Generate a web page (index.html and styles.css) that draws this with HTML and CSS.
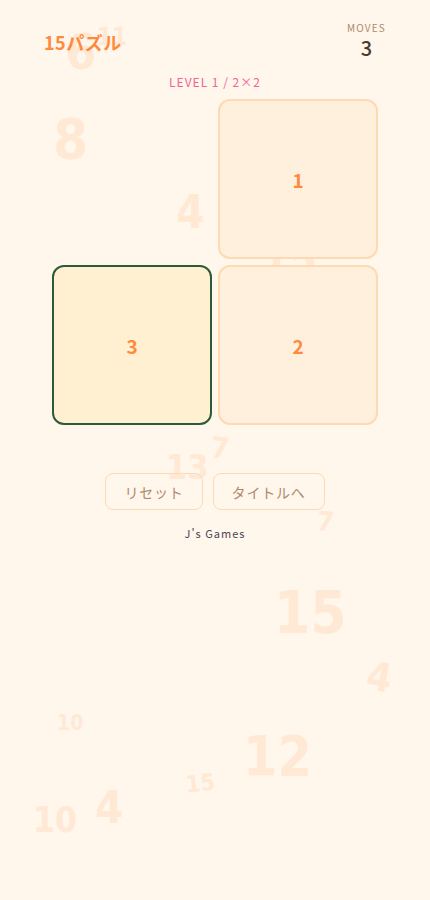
FILE: index.html
```html
<!DOCTYPE html>
<html lang="ja">
<head>
<meta charset="utf-8">
<title>15パズル</title>
<link rel="stylesheet" href="styles.css">
</head>
<body>
<div class="app">
  <div class="bg-nums" aria-hidden="true">
    <span class="bn n1">6</span>
    <span class="bn n2">11</span>
    <span class="bn n3">8</span>
    <span class="bn n4">4</span>
    <span class="bn n5">15</span>
    <span class="bn n6">13</span>
    <span class="bn n7">7</span>
    <span class="bn n8">7</span>
    <span class="bn n9">15</span>
    <span class="bn n10">4</span>
    <span class="bn n11">10</span>
    <span class="bn n12">12</span>
    <span class="bn n13">15</span>
    <span class="bn n14">4</span>
    <span class="bn n15">10</span>
  </div>
  <div class="content">
    <header class="header">
      <h1 class="title">15パズル</h1>
      <div class="moves">
        <div class="moves-label">MOVES</div>
        <div class="moves-value">3</div>
      </div>
    </header>
    <div class="level">LEVEL 1 / 2×2</div>
    <div class="board">
      <div class="cell empty"></div>
      <div class="cell tile">1</div>
      <div class="cell tile selected">3</div>
      <div class="cell tile">2</div>
    </div>
    <div class="actions">
      <button class="btn">リセット</button>
      <button class="btn">タイトルへ</button>
    </div>
    <div class="footer">J's Games</div>
  </div>
</div>
</body>
</html>
```
FILE: styles.css
```css
html, body {
  margin: 0;
  padding: 0;
  background: #fff6ec;
}
body {
  font-family: "Noto Sans CJK JP", "Noto Sans", sans-serif;
}
.app {
  position: relative;
  width: 430px;
  min-height: 900px;
  overflow: hidden;
  background: #fff6ec;
}
.bg-nums {
  position: absolute;
  inset: 0;
  z-index: 0;
}
.bn {
  position: absolute;
  font-family: "DejaVu Sans Condensed", "DejaVu Sans", sans-serif;
  font-stretch: condensed;
  font-weight: 700;
  color: #ffe9d5;
  line-height: 1;
}
.n1 { left: 65px; top: 27px; font-size: 50px; }
.n2 { left: 97px; top: 25px; font-size: 24px; }
.n3 { left: 53px; top: 111px; font-size: 56px; }
.n4 { left: 176px; top: 189px; font-size: 46px; }
.n5 { left: 262px; top: 238px; font-size: 44px; }
.n6 { left: 166px; top: 450px; font-size: 34px; }
.n7 { left: 211px; top: 434px; font-size: 29px; transform: rotate(6deg); }
.n8 { left: 317px; top: 508px; font-size: 27px; transform: rotate(6deg); }
.n9 { left: 274px; top: 584px; font-size: 58px; }
.n10 { left: 367px; top: 657px; font-size: 40px; transform: rotate(10deg); }
.n11 { left: 57px; top: 713px; font-size: 21px; }
.n12 { left: 243px; top: 729px; font-size: 55px; }
.n13 { left: 186px; top: 772px; font-size: 23px; transform: rotate(-6deg); }
.n14 { left: 95px; top: 785px; font-size: 45px; }
.n15 { left: 33px; top: 803px; font-size: 35px; }

.content {
  position: relative;
  z-index: 1;
}
.header {
  display: flex;
  justify-content: space-between;
  align-items: flex-start;
  padding: 20px 44px 0 44px;
}
.title {
  margin: 9px 0 0 0;
  font-size: 18px;
  font-weight: 700;
  letter-spacing: 0.5px;
  line-height: 26px;
  color: #ff8a3d;
}
.moves {
  text-align: center;
}
.moves-label {
  font-size: 10px;
  letter-spacing: 1.2px;
  line-height: 16px;
  color: #b0896a;
}
.moves-value {
  font-size: 20px;
  font-weight: 500;
  line-height: 24px;
  color: #4b3a2c;
}
.level {
  margin-top: 14px;
  text-align: center;
  font-size: 12px;
  letter-spacing: 1px;
  line-height: 16px;
  color: #f0649a;
}
.board {
  display: grid;
  grid-template-columns: 160px 160px;
  grid-auto-rows: 160px;
  gap: 6px;
  justify-content: center;
  margin-top: 9px;
}
.cell {
  box-sizing: border-box;
  border-radius: 12px;
}
.tile {
  display: flex;
  align-items: center;
  justify-content: center;
  background: #ffefdd;
  border: 2px solid #ffd9b2;
  color: #ff8a3d;
  font-size: 19px;
  font-weight: 700;
}
.tile.selected {
  background: #fff0d2;
  border-color: #2d5b3a;
}
.actions {
  display: flex;
  justify-content: center;
  gap: 10px;
  margin-top: 48px;
}
.btn {
  box-sizing: border-box;
  height: 37px;
  padding: 0 18px;
  background: transparent;
  border: 1px solid #ffd9b2;
  border-radius: 8px;
  font-family: "Noto Sans CJK JP", sans-serif;
  font-size: 14px;
  letter-spacing: 0.8px;
  color: #b0896a;
}
.footer {
  margin-top: 15px;
  text-align: center;
  font-size: 11px;
  letter-spacing: 1px;
  line-height: 16px;
  color: #4a4658;
}
```
